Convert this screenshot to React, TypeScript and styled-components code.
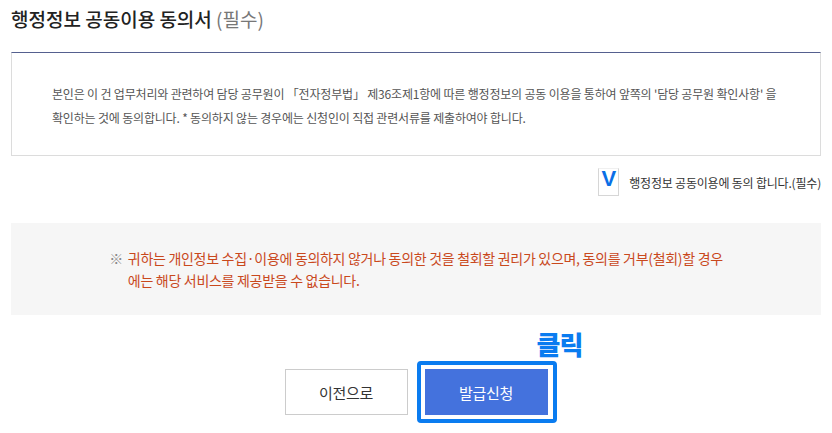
import React from 'react'
import styled, { createGlobalStyle } from 'styled-components'

const GlobalStyle = createGlobalStyle`
  html, body {
    margin: 0;
    padding: 0;
    background: #fff;
  }
  body {
    font-family: 'Noto Sans CJK KR', 'Noto Sans', sans-serif;
    color: #333;
  }
`

const Page = styled.div`
  width: 810px;
  min-height: 433px;
  padding: 0 11px;
  box-sizing: content-box;
`

const Title = styled.h2`
  margin: 0;
  height: 52px;
  padding-top: 5px;
  box-sizing: border-box;
  font-size: 19px;
  font-weight: 500;
  letter-spacing: 0;
  color: #222;
`

const Required = styled.span`
  color: #777;
  font-weight: 400;
`

const AgreementBox = styled.div`
  border: 1px solid #dcdcdc;
  border-top: 1px solid #55608f;
  padding: 29px 40px 25px;
  font-size: 12px;
  line-height: 24px;
  letter-spacing: -0.18px;
  color: #555;
`

const CheckRow = styled.label`
  display: flex;
  justify-content: flex-end;
  align-items: center;
  gap: 10px;
  margin-top: 12px;
  font-size: 12px;
  letter-spacing: -0.2px;
  color: #333;
`

const CheckBox = styled.span`
  display: flex;
  justify-content: center;
  width: 21px;
  height: 28px;
  box-sizing: border-box;
  border: 1px solid #d6d6d6;
  border-top-color: #f0f0f0;
  font-family: 'Liberation Sans', Arial, sans-serif;
  font-size: 22px;
  font-weight: 700;
  line-height: 19px;
  color: #0a6fe6;
`

const Notice = styled.div`
  display: flex;
  justify-content: center;
  margin-top: 27px;
  padding: 24px 0 24px;
  background: #f6f6f6;
  font-size: 14px;
  line-height: 22px;
  letter-spacing: -0.3px;
`

const Mark = styled.span`
  color: #888;
  margin-right: 5px;
`

const NoticeText = styled.p`
  margin: 0;
  color: #c9481c;
`

const Buttons = styled.div`
  display: flex;
  justify-content: center;
  gap: 17px;
  margin-top: 54px;
`

const Button = styled.button<{ $primary?: boolean }>`
  position: relative;
  overflow: visible;
  width: 123px;
  height: 46px;
  border: 1px solid ${({ $primary }) => ($primary ? '#4472dd' : '#cccccc')};
  background: ${({ $primary }) => ($primary ? '#4472dd' : '#fff')};
  color: ${({ $primary }) => ($primary ? '#fff' : '#333')};
  font-family: 'Noto Sans CJK KR', sans-serif;
  font-size: 15px;
  letter-spacing: -0.3px;
  cursor: pointer;
`

const Highlight = styled.span`
  position: absolute;
  inset: -9px -10px -9px -9px;
  border: 4px solid #0a7cf0;
  border-radius: 4px;
  pointer-events: none;
`

const ClickLabel = styled.span`
  position: absolute;
  left: 111px;
  top: -45px;
  font-size: 26px;
  font-weight: 900;
  letter-spacing: -1px;
  color: #0a7cf0;
  -webkit-text-stroke: 4px #fff;
  paint-order: stroke fill;
  white-space: nowrap;
`

export default function App() {
  return (
    <>
      <GlobalStyle />
      <Page>
        <Title>
          행정정보 공동이용 동의서 <Required>(필수)</Required>
        </Title>
        <AgreementBox>
          본인은 이 건 업무처리와 관련하여 담당 공무원이 「전자정부법」 제36조제1항에 따른 행정정보의 공동 이용을 통하여 앞쪽의 '담당 공무원 확인사항' 을
          <br />
          확인하는 것에 동의합니다. * 동의하지 않는 경우에는 신청인이 직접 관련서류를 제출하여야 합니다.
        </AgreementBox>
        <CheckRow>
          <CheckBox>V</CheckBox>
          행정정보 공동이용에 동의 합니다.(필수)
        </CheckRow>
        <Notice>
          <Mark>※</Mark>
          <NoticeText>
            귀하는 개인정보 수집·이용에 동의하지 않거나 동의한 것을 철회할 권리가 있으며, 동의를 거부(철회)할 경우
            <br />
            에는 해당 서비스를 제공받을 수 없습니다.
          </NoticeText>
        </Notice>
        <Buttons>
          <Button>이전으로</Button>
          <Button $primary>
            발급신청
            <Highlight />
            <ClickLabel>클릭</ClickLabel>
          </Button>
        </Buttons>
      </Page>
    </>
  )
}
